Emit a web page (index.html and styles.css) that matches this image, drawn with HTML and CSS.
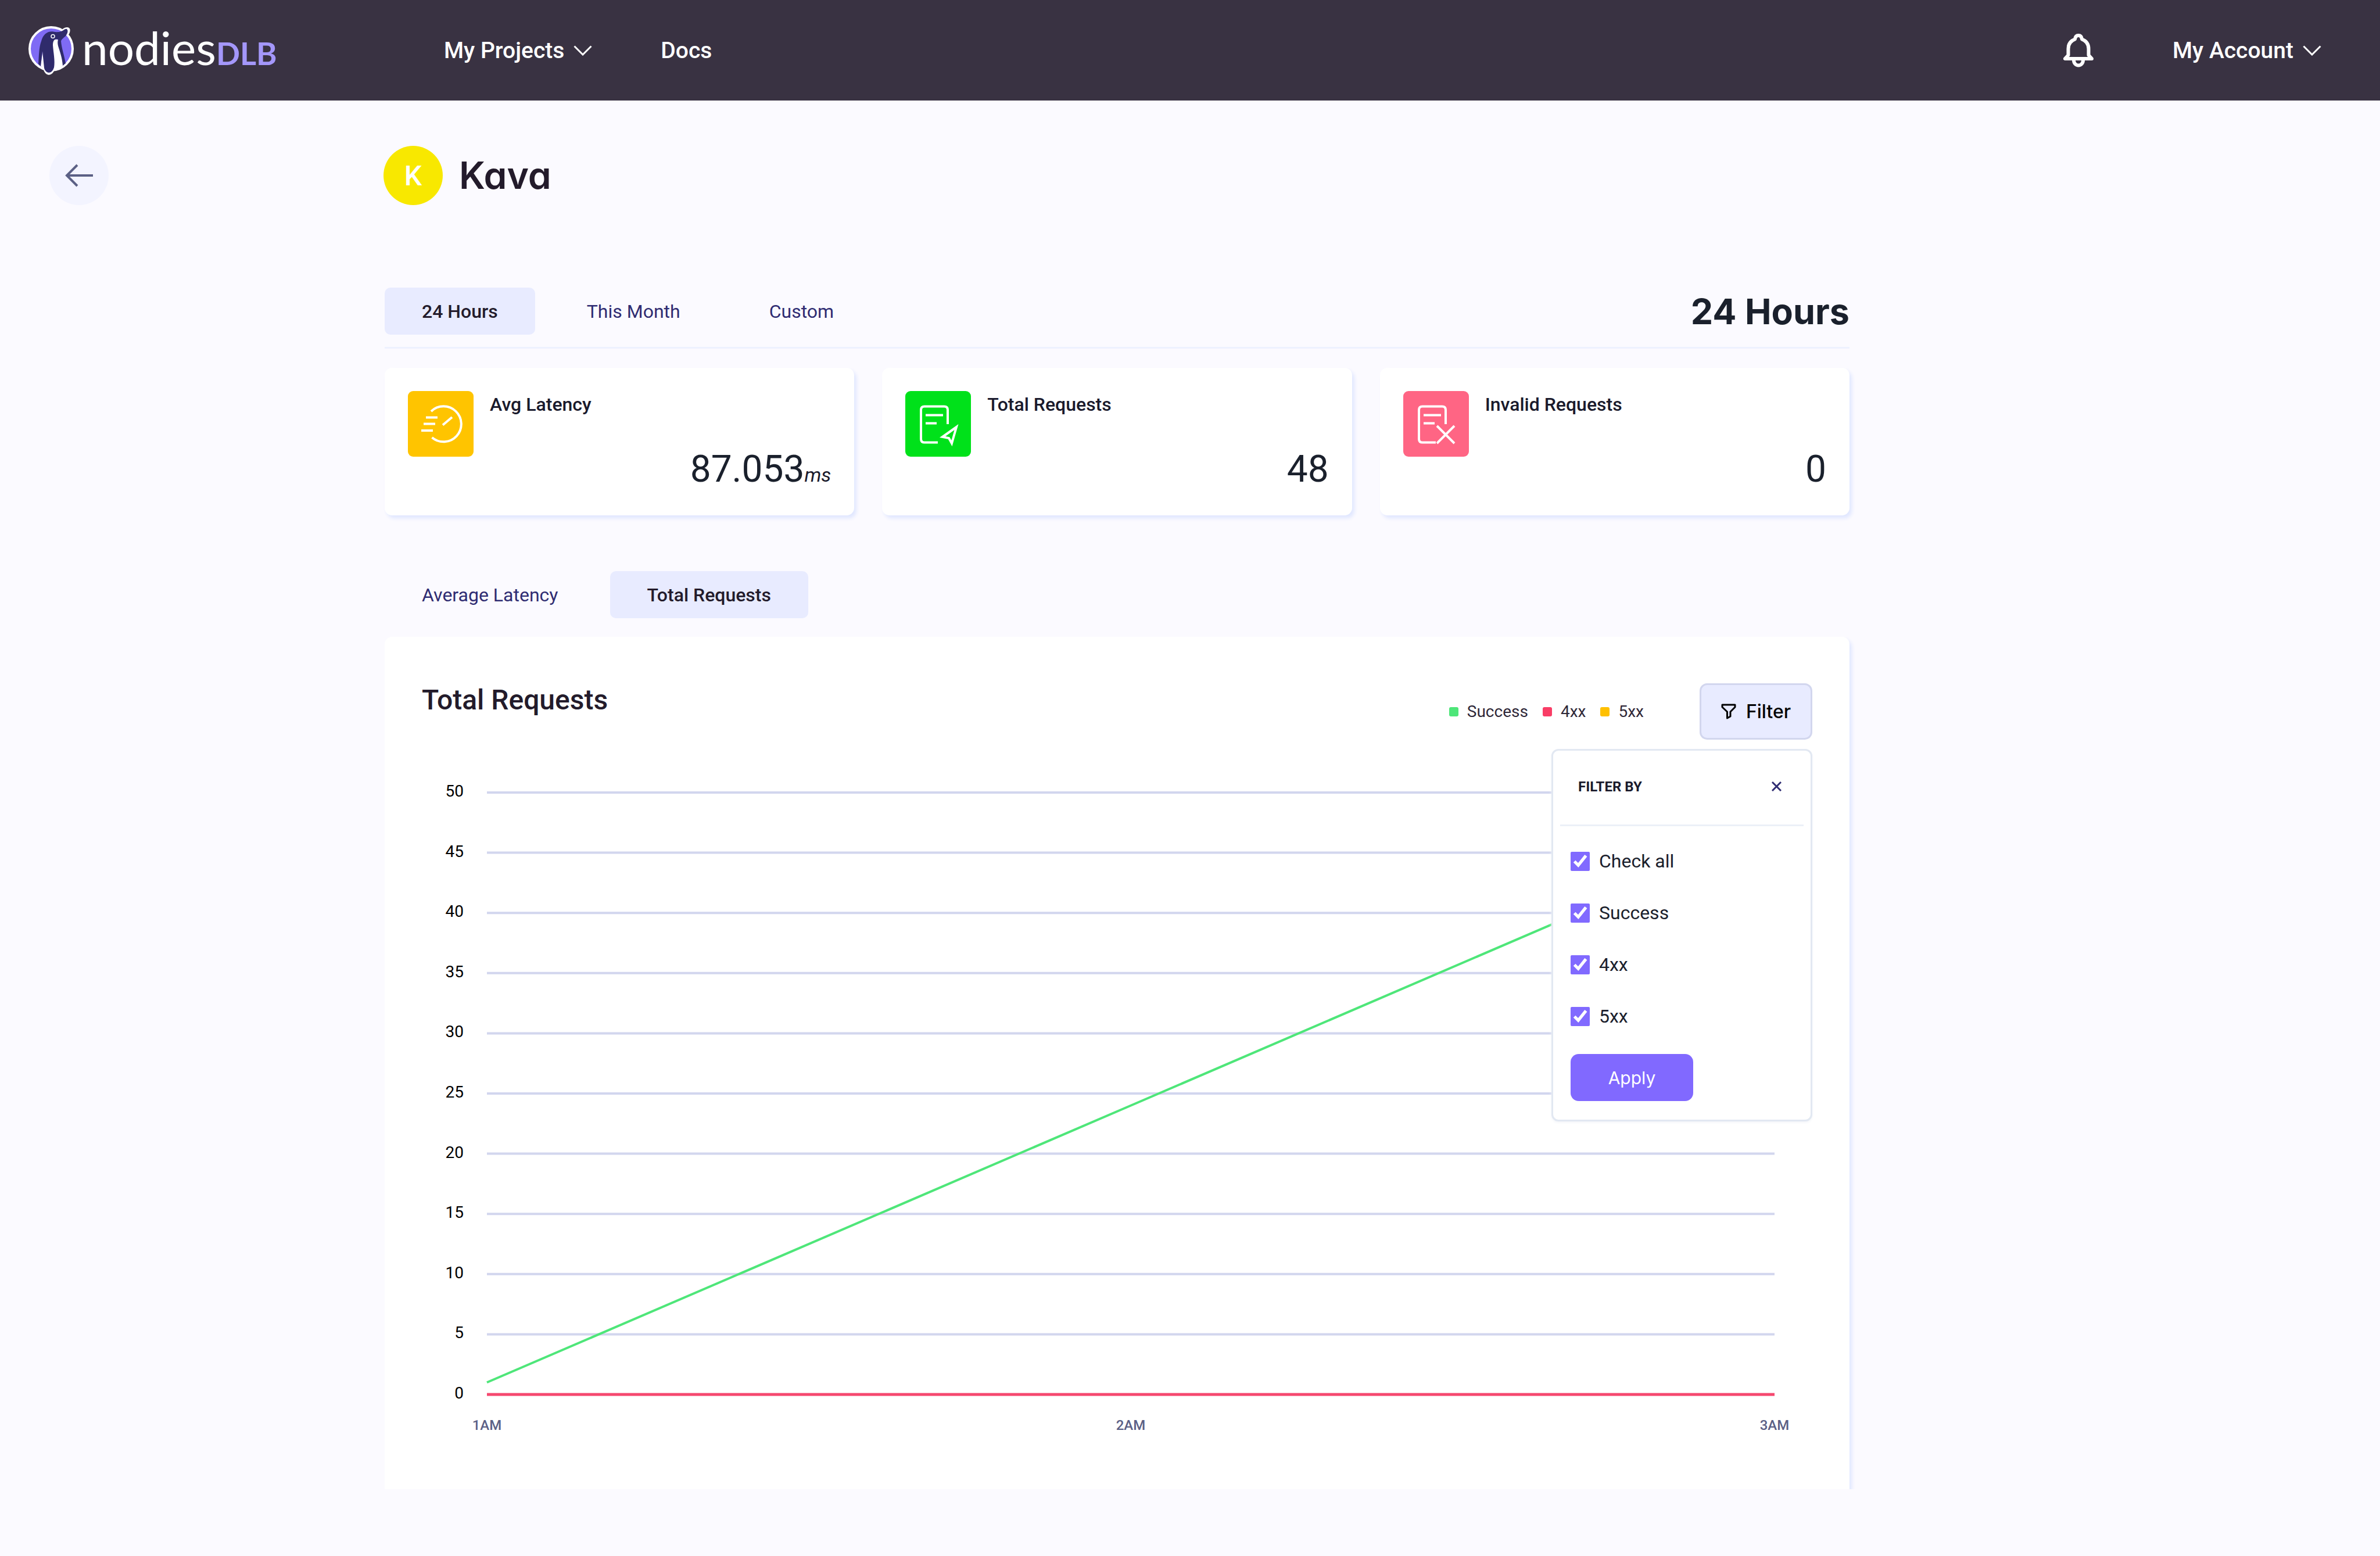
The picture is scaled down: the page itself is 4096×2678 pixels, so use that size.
FILE: index.html
```html
<!DOCTYPE html>
<html lang="en">
<head>
<meta charset="utf-8">
<title>Kava – nodies DLB</title>
<link rel="stylesheet" href="styles.css">
</head>
<body>
<header class="topbar">
  <a class="logo" href="#">
    <svg class="logo-mark" viewBox="0 0 78 84" aria-hidden="true">
      <path d="M54 9C59 7 62 2 67 3S71 9 69 13L60 26L44 74C43 79 39 83 35 83S28 79 26 73Z" fill="#fff" stroke="#fff" stroke-width="2" stroke-linejoin="round"/>
      <circle cx="39" cy="39" r="37" fill="#7f6bf5" stroke="#fff" stroke-width="4"/>
      <path d="M25 40L21 68C25 73 35 78 46 75C52 73 56 70 60 67L53 24L45 22Z" fill="#fff"/>
      <path d="M56 9C60 8 63 4 66 5C69 8 67 13 64 17C61 20 57 22 56 26C57 38 62 52 64 64L59 68C58 54 54 44 51 34C50 30 50 26 51 23C44 21 42 26 42 33C43 46 46 60 44 71C42 77 39 80 35 80C31 80 28 76 27 72C26 62 25 52 24 43C23 52 22 60 21 69L17 65C18 52 18 36 22 26C25 14 33 8 43 9.500C47 10.500 52 10.500 56 9Z" fill="#2f2b6b"/>
      <ellipse cx="42" cy="17.500" rx="3" ry="3" fill="none" stroke="#fff" stroke-width="1.500"/>
    </svg>
    <span class="logo-name">nodies<span class="logo-suffix">DLB</span></span>
  </a>
  <nav class="menu">
    <button class="menu-item" type="button">My Projects
      <svg class="chevron" viewBox="0 0 32 18" aria-hidden="true"><path d="M1.500 1.500L16 16L30.500 1.500"/></svg>
    </button>
    <a class="menu-item" href="#">Docs</a>
  </nav>
  <div class="account">
    <button class="icon-button" type="button" aria-label="Notifications">
      <svg class="bell" viewBox="0 0 52 58" aria-hidden="true"><path d="M26 3C22.500 3 20.500 5.500 20 9.500C12 12.500 8.500 18 8.500 26V37L3 43H49L43.500 37V26C43.500 18 40 12.500 32 9.500C31.500 5.500 29.500 3 26 3Z"/><path d="M18 46A8 8.500 0 0 0 34 46"/></svg>
    </button>
    <button class="menu-item" type="button">My Account
      <svg class="chevron" viewBox="0 0 32 18" aria-hidden="true"><path d="M1.500 1.500L16 16L30.500 1.500"/></svg>
    </button>
  </div>
</header>

<main class="page">
  <aside class="side">
    <a class="back" href="#" aria-label="Back">
      <svg class="back-icon" viewBox="0 0 48 40" aria-hidden="true"><path d="M48 20H3M21 2L3 20L21 38"/></svg>
    </a>
  </aside>

  <div class="content">
    <div class="title">
      <span class="avatar">K</span>
      <h1 class="title-text">Kava</h1>
    </div>

    <div class="range">
      <div class="tabs">
        <button class="tab tab-active" type="button">24 Hours</button>
        <button class="tab" type="button">This Month</button>
        <button class="tab" type="button">Custom</button>
      </div>
      <h2 class="range-title">24 Hours</h2>
    </div>

    <section class="cards">
      <article class="card">
        <svg class="card-icon card-icon-yellow" viewBox="0 0 113 113" aria-hidden="true"><path d="M40 35A30.500 30.500 0 1 1 41.500 80M31 45.500H51M27 56.500H47M23 68H43M60 58.500L76 45"/></svg>
        <div class="card-body">
          <h3 class="card-label">Avg Latency</h3>
          <p class="card-value">87.053<em class="unit">ms</em></p>
        </div>
      </article>
      <article class="card">
        <svg class="card-icon card-icon-green" viewBox="0 0 113 113" aria-hidden="true"><path d="M56 88.500H33Q27 88.500 27 82.500V32.500Q27 26.500 33 26.500H67Q73 26.500 73 32.500V57M35 41.500H65M35 55.500H54M88 62L64 79L75 81L80 90Z"/></svg>
        <div class="card-body">
          <h3 class="card-label">Total Requests</h3>
          <p class="card-value">48</p>
        </div>
      </article>
      <article class="card">
        <svg class="card-icon card-icon-red" viewBox="0 0 113 113" aria-hidden="true"><path d="M56 88.500H33Q27 88.500 27 82.500V32.500Q27 26.500 33 26.500H67Q73 26.500 73 32.500V57M35 41.500H65M35 55.500H54M58 60L88 90M88 60L58 90"/></svg>
        <div class="card-body">
          <h3 class="card-label">Invalid Requests</h3>
          <p class="card-value">0</p>
        </div>
      </article>
    </section>

    <div class="tabs metric-tabs">
      <button class="tab" type="button">Average Latency</button>
      <button class="tab tab-active" type="button">Total Requests</button>
    </div>

    <section class="panel">
      <div class="panel-head">
        <h2 class="panel-title">Total Requests</h2>
        <ul class="legend">
          <li class="legend-item"><span class="swatch swatch-success"></span>Success</li>
          <li class="legend-item"><span class="swatch swatch-4xx"></span>4xx</li>
          <li class="legend-item"><span class="swatch swatch-5xx"></span>5xx</li>
        </ul>
        <div class="filter">
          <button class="filter-button" type="button">
            <svg class="funnel" viewBox="0 0 26 27" aria-hidden="true"><path d="M2 2H24V6L16 14V22L10.500 25V14L2 6Z"/></svg>
            Filter
          </button>
          <form class="popover">
            <div class="popover-head">
              <h3 class="popover-title">FILTER BY</h3>
              <button class="icon-button" type="button" aria-label="Close">
                <svg class="close" viewBox="0 0 17 17" aria-hidden="true"><path d="M1 1L16 16M16 1L1 16"/></svg>
              </button>
            </div>
            <div class="popover-body">
              <label class="check"><input class="check-box" type="checkbox" checked>Check all</label>
              <label class="check"><input class="check-box" type="checkbox" checked>Success</label>
              <label class="check"><input class="check-box" type="checkbox" checked>4xx</label>
              <label class="check"><input class="check-box" type="checkbox" checked>5xx</label>
              <button class="apply" type="button">Apply</button>
            </div>
          </form>
        </div>
      </div>

      <div class="chart">
        <ol class="y-axis">
          <li>50</li><li>45</li><li>40</li><li>35</li><li>30</li><li>25</li><li>20</li><li>15</li><li>10</li><li>5</li><li>0</li>
        </ol>
        <svg class="plot" viewBox="0 0 100 50" preserveAspectRatio="none" role="img" aria-label="Total requests by hour">
          <path class="grid-lines" d="M0 0H100M0 5H100M0 10H100M0 15H100M0 20H100M0 25H100M0 30H100M0 35H100M0 40H100M0 45H100M0 50H100"/>
          <path class="line line-success" d="M0 49L50 26L100 3"/>
          <path class="line line-4xx" d="M0 50H100"/>
        </svg>
        <ol class="x-axis">
          <li>1AM</li><li>2AM</li><li>3AM</li>
        </ol>
      </div>
    </section>
  </div>
</main>
</body>
</html>
```
FILE: styles.css
```css
* { box-sizing: border-box; }

body {
  margin: 0;
  background: #fbfaff;
  color: #1a1a2c;
  font-family: Roboto, "Liberation Sans", sans-serif;
  font-size: 32px;
}

h1, h2, h3, p, ul, ol { margin: 0; padding: 0; }
ul, ol { list-style: none; }
a { color: inherit; text-decoration: none; }

button {
  padding: 0;
  border: 0;
  background: none;
  color: inherit;
  font: inherit;
  cursor: pointer;
}

svg { display: block; fill: none; }

/* Top bar */
.topbar {
  display: flex;
  align-items: center;
  min-height: 173px;
  padding: 0 101px 0 49px;
  background: #393242;
  color: #fff;
}

.logo {
  display: flex;
  flex: 0 0 715px;
  align-items: center;
  gap: 14px;
}

.logo-mark { width: 78px; height: 84px; }

.logo-name {
  font-family: Lato, sans-serif;
  font-size: 80px;
  line-height: 88px;
}

.logo-suffix {
  color: #a497fa;
  font-size: 54px;
  font-weight: 700;
}

.menu { display: flex; gap: 118px; }
.account { display: flex; align-items: center; gap: 136px; margin-left: auto; }

.menu-item {
  display: flex;
  align-items: center;
  gap: 16px;
  font-size: 39px;
  font-weight: 500;
  line-height: 48px;
}

.chevron { width: 32px; height: 18px; stroke: #fff; stroke-width: 3; }
.bell { width: 52px; height: 58px; stroke: #fff; stroke-width: 6; stroke-linejoin: round; }

/* Page */
.page {
  display: grid;
  grid-template-columns: 577px 1fr;
  padding: 78px 913px 116px 85px;
}

.back {
  display: flex;
  align-items: center;
  justify-content: center;
  width: 102px;
  height: 102px;
  border-radius: 50%;
  background: #f3f4ff;
}

.back-icon { width: 48px; height: 40px; stroke: #5b6085; stroke-width: 4; }

.title { display: flex; align-items: center; gap: 28px; height: 102px; }

.avatar {
  display: flex;
  align-items: center;
  justify-content: center;
  width: 102px;
  height: 102px;
  margin-left: -2px;
  border-radius: 50%;
  background: #f8e800;
  color: #fff;
  font-size: 48px;
  font-weight: 500;
}

.title-text {
  color: #231b2b;
  font-family: Inter, sans-serif;
  font-feature-settings: "cv11";
  font-size: 64px;
  font-weight: 600;
  line-height: 78px;
}

.range {
  display: flex;
  align-items: center;
  justify-content: space-between;
  margin-top: 142px;
  padding-bottom: 21px;
  border-bottom: 3px solid #eef1ff;
}

.range-title {
  color: #1a202c;
  font-family: Inter, sans-serif;
  font-size: 61px;
  font-weight: 700;
  line-height: 78px;
}

.tabs { display: flex; gap: 25px; }

.tab {
  height: 81px;
  padding: 0 64px;
  border-radius: 10px;
  color: #2f2c72;
}

.tab-active { background: #e8ebff; color: #231b2b; font-weight: 500; }

/* Summary cards */
.cards {
  display: grid;
  grid-template-columns: repeat(3, 1fr);
  gap: 48px;
  margin-top: 33px;
}

.card {
  display: flex;
  align-items: flex-start;
  gap: 28px;
  padding: 40px;
  border-radius: 13px;
  background: #fff;
  box-shadow: 4px 5px 6px #e0e7ff;
}

.card-icon {
  width: 113px;
  height: 113px;
  border-radius: 9px;
  stroke: #fff;
  stroke-width: 4;
}

.card-icon-yellow { background: #ffc400; }
.card-icon-green { background: #00e11a; }
.card-icon-red { background: #ff6584; }

.card-body { flex: 1; }
.card-label { font-size: 32px; font-weight: 500; line-height: 46px; }

.card-value {
  margin-top: 50px;
  color: #1a202c;
  font-size: 64px;
  line-height: 78px;
  text-align: right;
}

.unit { color: #1a1a2c; font-size: 34px; line-height: 1; }

.metric-tabs { margin-top: 96px; }

/* Chart panel */
.panel {
  margin-top: 32px;
  padding: 80px 64px 94px;
  border-radius: 13px 13px 0 0;
  background: #fff;
  box-shadow: 4px 5px 6px #e0e7ff;
  clip-path: inset(0 -16px 0 0);
}

.panel-head { display: flex; align-items: center; height: 97px; }

.panel-title {
  flex: 1;
  align-self: flex-start;
  color: #231b2b;
  font-size: 48px;
  font-weight: 500;
  line-height: 57px;
}

.legend { display: flex; gap: 25px; margin-right: 96px; color: #2f2838; font-size: 28px; }
.legend-item { display: flex; align-items: center; gap: 15px; }
.swatch { width: 16px; height: 16px; border-radius: 3px; }
.swatch-success { background: #4ee679; }
.swatch-4xx { background: #f93d66; }
.swatch-5xx { background: #ffc000; }

.filter { position: relative; }

.filter-button {
  display: flex;
  align-items: center;
  justify-content: center;
  gap: 17px;
  width: 194px;
  height: 97px;
  border: 3px solid #d2d6ee;
  border-radius: 13px;
  background: #e8ebff;
  color: #000;
  font-family: Inter, sans-serif;
  font-size: 32px;
  font-weight: 500;
}

.funnel { width: 26px; height: 27px; stroke: #000; stroke-width: 3; stroke-linejoin: round; }

.popover {
  position: absolute;
  top: calc(100% + 16px);
  right: 0;
  z-index: 1;
  width: 449px;
  padding: 0 12px 32px;
  border: 3px solid #e2e8f2;
  border-radius: 12px;
  background: #fff;
  box-shadow: 0 2px 4px #f3f5f9;
}

.popover-head {
  display: flex;
  align-items: center;
  justify-content: space-between;
  height: 130px;
  padding: 0 38px 4px 31px;
  border-bottom: 3px solid #ecf0f8;
}

.popover-title { font-size: 24px; font-weight: 700; line-height: 32px; }
.close { width: 17px; height: 17px; stroke: #2f2c72; stroke-width: 3; }

.popover-body {
  display: flex;
  flex-direction: column;
  align-items: flex-start;
  gap: 48px;
  padding: 40px 18px 0;
}

.check { display: flex; align-items: center; gap: 16px; color: #1a202c; line-height: 41px; }
.check-box { width: 33px; height: 33px; margin: 0; accent-color: #816aff; }

.apply {
  width: 211px;
  height: 81px;
  margin-top: -4px;
  border-radius: 14px;
  background: #8169ff;
  color: #fff;
  font-family: Inter, sans-serif;
  font-size: 30px;
}

.chart {
  display: grid;
  grid-template-columns: 72px 1fr;
  column-gap: 40px;
  margin-top: 91px;
  padding-right: 65px;
}

.y-axis {
  display: flex;
  flex-direction: column;
  justify-content: space-between;
  margin: -18px 0 -14px;
  color: #000;
  font-size: 28px;
  line-height: 32px;
  text-align: right;
}

.plot { width: 100%; height: 1036px; overflow: visible; }
.grid-lines { stroke: #d2d6ee; stroke-width: 4; vector-effect: non-scaling-stroke; }
.line { stroke-width: 4; vector-effect: non-scaling-stroke; }
.line-success { stroke: #4ee679; }
.line-4xx { stroke: #f5486f; stroke-width: 5; }

.x-axis {
  display: flex;
  grid-column: 2;
  justify-content: space-between;
  margin: 37px -30px 0;
  color: #5b6085;
  font-size: 24px;
  font-weight: 500;
  line-height: 32px;
  text-align: center;
}

.x-axis li { width: 60px; }
```
